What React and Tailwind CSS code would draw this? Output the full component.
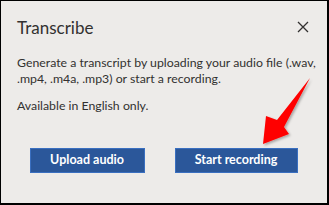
export default function App() {
  return (
    <div className="relative w-[329px] h-[205px] bg-[#edebe9] border-t border-l border-r-2 border-b-2 border-black text-[#323130] font-['Segoe_UI','Lato',sans-serif] overflow-hidden">
      <div className="flex items-center justify-between pl-[16px] pr-[18px] pt-[14px] h-[38px]">
        <h1 className="text-[17px] leading-none">Transcribe</h1>
        <svg width="12" height="12" viewBox="0 0 12 12" className="text-[#323130]">
          <path d="M1 1L11 11M11 1L1 11" stroke="currentColor" strokeWidth="1.3" />
        </svg>
      </div>
      <p className="mt-[16px] pl-[16px] pr-[2px] text-[12.3px] leading-[16px]">
        Generate a transcript by uploading your audio file (.wav, .mp4, .m4a, .mp3) or start a recording.
      </p>
      <p className="mt-[11px] pl-[16px] text-[12.3px] leading-[16px]">Available in English only.</p>
      <div className="flex justify-center gap-[30px] mt-[34px] pr-[1px]">
        <button className="w-[115px] h-[25px] bg-[#2b579a] border border-[#3a6fc0] text-white text-[12.5px] font-bold">
          Upload audio
        </button>
        <button className="w-[123px] h-[25px] bg-[#2b579a] border border-[#3a6fc0] text-white text-[12.5px] font-bold">
          Start recording
        </button>
      </div>
      <svg className="absolute left-0 top-0 pointer-events-none" width="329" height="205" viewBox="0 0 329 205">
        <defs>
          <filter id="sh" x="-20%" y="-20%" width="140%" height="140%">
            <feDropShadow dx="1.5" dy="1.5" stdDeviation="1.2" floodColor="#000" floodOpacity="0.3" />
          </filter>
        </defs>
        <polygon
          points="309,77 283,126 288,133 262,143 265,115 276,119"
          fill="#ff0000"
          filter="url(#sh)"
        />
      </svg>
    </div>
  );
}
